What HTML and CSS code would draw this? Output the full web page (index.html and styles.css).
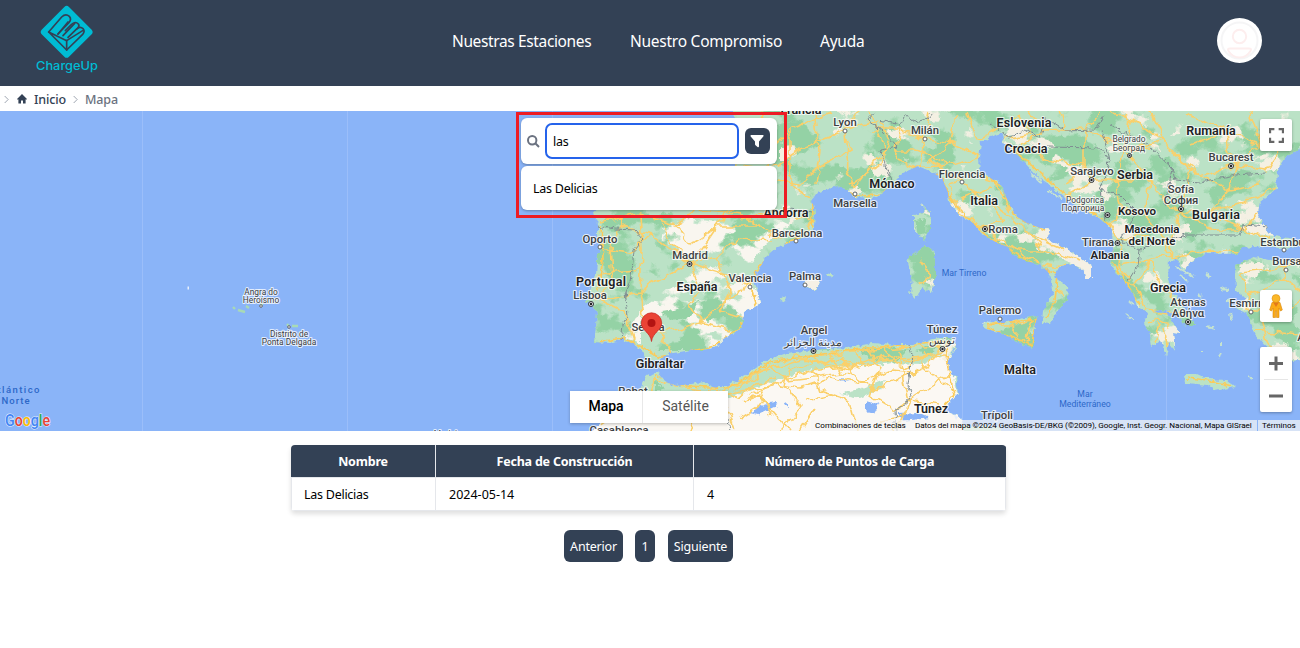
FILE: index.html
```html
<!DOCTYPE html>
<html lang="es">
<head>
<meta charset="utf-8">
<title>ChargeUp</title>
<link rel="stylesheet" href="styles.css">
</head>
<body>
<header class="topbar">
  <svg class="logo" viewBox="0 0 70 70" aria-label="ChargeUp">
    <g transform="scale(.33333) translate(-105 0)">
      <path class="logo-shape" d="M193 21Q200 14 207 21L275 89Q281 96 275 103L207 170Q200 177 193 170L125 103Q119 96 125 89Z"/>
      <g class="logo-lines">
        <path d="M146 96 185 51Q197 39 208 49Q216 58 206 69L174 102"/>
        <path d="M224 70 189 107"/>
        <path d="M204 112 231 86Q241 78 249 86Q256 94 248 103L200 150 146 96 200 122 248 92"/>
        <path d="M200 122V150M174 102 204 66M196 92 214 74Q226 62 235 72Q240 78 232 86"/>
      </g>
    </g>
    <text class="logo-name" x="1" y="70" textLength="62" lengthAdjust="spacingAndGlyphs">ChargeUp</text>
  </svg>
  <nav class="nav">
    <a class="link-a">Nuestras Estaciones</a><a class="link-b">Nuestro Compromiso</a><a class="link-c">Ayuda</a>
  </nav>
  <svg class="avatar" viewBox="0 0 45 45">
    <circle cx="22.500" cy="22.500" r="22.500" fill="#fff"/>
    <circle cx="22.500" cy="22.500" r="18" fill="none" stroke="#f5f5f6" stroke-width="2"/>
    <g fill="none" stroke="#fdeeee" stroke-width="2"><circle cx="22.500" cy="18.500" r="6.700"/><path d="M13 30.500H32Q35 30.500 33.500 33Q29.500 39.500 22.500 39.500T11.500 33Q10 30.500 13 30.500Z"/></g>
  </svg>
</header>
<div class="crumbs">
  <svg class="chev" viewBox="0 0 6 10"><path d="M.8.800 5 5 .8 9.200"/></svg>
  <svg class="home" viewBox="0 0 10 10"><path d="M5 0 10 5 9.200 5.800 8.600 5.300V9.500H6V6.500H4V9.500H1.400V5.300L.8 5.800 0 5Z"/></svg>
  <span class="crumb-home">Inicio</span>
  <svg class="chev second" viewBox="0 0 6 10"><path d="M.8.800 5 5 .8 9.200"/></svg>
  <span class="crumb-here">Mapa</span>
</div>
<main>
<section class="map">
  <svg class="canvas" viewBox="0 111 1300 320">
    <defs>
      <path id="europe" d="M732 105 734 120 735 165 728 190 700 196 650 195 610 197 600 204 593 213 598 225 598 240 600 248 597 262 596 275 591 288 586 301 592 305 597 313 596 328 594 342 610 343 622 339 636 345 643 352 646 359 652 362 660 360 668 354 690 350 703 350 717 347 723 339 736 331 742 328 744 313 760 303 757 290 752 280 758 272 765 258 778 247 797 240 808 234 814 226 815 213 812 200 816 194 835 186 848 190 854 197 866 199 877 197 890 186 903 173 918 166 932 172 942 178 947 190 949 200 956 210 960 216 972 222 980 232 995 242 1008 247 1014 256 1030 262 1040 264 1048 272 1052 284 1054 294 1048 300 1043 312 1042 322 1050 323 1058 310 1068 300 1067 286 1054 276 1060 266 1073 264 1085 271 1086 278 1092 278 1092 266 1070 251 1047 239 1051 230 1040 228 1027 223 1017 217 1010 206 1002 188 997 181 980 173 979 158 981 143 990 137 1002 133 1004 143 1012 149 1023 161 1040 179 1060 193 1080 209 1100 218 1112 229 1113 249 1111 266 1123 281 1134 294 1137 307 1150 313 1160 310 1178 314 1186 326 1196 326 1192 316 1182 306 1173 293 1168 278 1169 261 1176 259 1184 271 1190 262 1207 253 1237 254 1243 248 1267 246 1285 249 1302 246 1302 240 1273 236 1257 216 1260 202 1277 188 1278 170 1287 156 1302 148V105Z"/>
      <path id="south" d="M657 372 665 382 677 386 703 382 714 387 727 387 747 374 767 360 787 353 813 350 847 348 873 343 895 345 913 345 940 337 950 337 958 344 948 360 949 370 956 377 958 394 943 410 960 417 963 425 998 427 1004 435H588L600 424 622 414 640 390 647 376ZM1144 324 1150 333 1152 347 1160 340 1166 356 1169 343 1176 352 1173 333 1180 334 1174 325 1167 313 1148 312Z"/>
      <path id="islands" d="M921 203 930 212 930 230 924 241 914 229 914 215 926 211ZM926 245 935 252 935 278 932 293 922 289 915 299 910 294 912 278 907 259 915 254ZM984 320 1004 323 1014 320 1038 316 1034 327 1034 348 1021 344 1002 333 983 328ZM803 285 811 277 820 281 816 291ZM780 300 786 296 785 302ZM827 273 835 275 829 278ZM1185 374 1197 374 1208 379 1226 380 1235 387 1215 391 1207 385 1186 383ZM1235 265 1255 257 1275 261 1302 258V360L1284 362 1268 349 1254 333 1249 316 1236 308 1246 299 1236 291Z"/>
      <path id="bits" d="M1176 267 1195 277M1180 275 1188 282M1129 302 1134 305M1126 314 1133 320M1220 287 1228 291M1227 299 1232 304M1206 327 1215 329M1221 342V346M1201 351H1204M1219 358 1221 352M1249 376 1252 379M1230 313 1232 320M1197 294 1202 297M1207 275 1211 277M1047 190 1063 199M1030 172 1041 182M955 209 961 207"/>
      <clipPath id="land"><use href="#europe"/><use href="#south"/><use href="#islands"/></clipPath>
      <filter id="forest" x="0" y="0" width="100%" height="100%" color-interpolation-filters="sRGB"><feTurbulence type="fractalNoise" baseFrequency=".022 .03" numOctaves="4" seed="12"/><feColorMatrix values="0 0 0 0 .58 0 0 0 0 .824 0 0 0 0 .647 14 0 0 0 -7.200"/></filter>
      <filter id="plain" x="0" y="0" width="100%" height="100%" color-interpolation-filters="sRGB"><feTurbulence type="fractalNoise" baseFrequency=".03 .04" numOctaves="4" seed="31"/><feColorMatrix values="0 0 0 0 .957 0 0 0 0 .94 0 0 0 0 .89 0 20 0 0 -12.700"/></filter>
      <filter id="mixed" x="0" y="0" width="100%" height="100%" color-interpolation-filters="sRGB"><feTurbulence type="fractalNoise" baseFrequency=".018 .04" numOctaves="4" seed="8"/><feColorMatrix values="0 0 0 0 .733 0 0 0 0 .886 0 0 0 0 .776 0 18 0 0 -8.900"/></filter>
      <filter id="rough" x="-5%" y="-5%" width="110%" height="110%" color-interpolation-filters="sRGB"><feTurbulence type="fractalNoise" baseFrequency=".09" numOctaves="2" seed="4"/><feDisplacementMap in="SourceGraphic" scale="11" xChannelSelector="R" yChannelSelector="G"/></filter>
      <filter id="coast" x="-5%" y="-5%" width="110%" height="110%" color-interpolation-filters="sRGB"><feTurbulence type="fractalNoise" baseFrequency=".2" numOctaves="2" seed="9"/><feDisplacementMap in="SourceGraphic" scale="6" xChannelSelector="R" yChannelSelector="G"/></filter>
    </defs>
    <rect y="111" width="1300" height="320" fill="#8ab4f8"/>
    <g class="grid"><path d="M142.500 111V431M347.500 111V431M552.500 111V431M757.500 111V431M962.500 111V431M1166.500 111V431"/></g>
    <g filter="url(#coast)">
      <g clip-path="url(#land)">
        <rect x="570" y="100" width="735" height="335" fill="#bbe2c6"/>
        <path fill="#f9f6ef" d="M668 215 700 220 745 225 775 218 790 225 760 250 745 275 762 300 740 330 715 349 680 350 690 325 675 310 660 315 650 325 645 345 625 338 640 310 665 290 690 282 665 265 680 250 662 240Z"/>
        <path fill="#fbf8f3" d="M585 435 600 420 640 400 690 396 730 398 765 384 800 372 840 366 885 364 925 358 950 355 965 435Z"/>
        <g><rect x="640" y="210" width="140" height="150" filter="url(#mixed)"/><rect x="570" y="100" width="730" height="250" filter="url(#forest)"/><rect x="780" y="100" width="520" height="260" filter="url(#plain)"/></g>
        <path fill="#f5f0e5" d="M1050 232 1070 248 1092 262 1094 280 1086 278 1082 268 1060 258 1042 240ZM1240 228 1265 222 1275 236 1250 234ZM803 285 811 277 820 281 816 291Z"/>
        <path fill="#bbe2c6" d="M840 394 862 388 884 379 880 389 860 398ZM650 374 672 388 670 397 645 396 638 400ZM780 356 820 352 890 350 945 340 940 350 925 364 840 362 790 372Z"/>
        <path fill="#94d2a5" d="M860 350 890 347 908 350 896 362 870 360ZM916 350 938 344 930 355ZM655 380 665 389 655 392ZM915 220 926 218 925 233 918 235ZM918 252 930 252 931 260ZM700 310 722 302 726 312 708 322ZM662 312 685 308 700 300 690 318 670 320Z"/>
        <path fill="#8ab4f8" d="M866 400 879 404 874 413 866 411ZM838 379 850 380 840 382ZM750 413 768 403 778 402 775 407 758 415ZM897 414 920 413 930 418 903 421ZM784 404 789 403V407Z"/>
      </g>
      <g class="bits"><use href="#bits"/></g>
    </g>
    <path class="azores" d="M233 307 235 309M238 310 245 312M246 306 249 308M287 324 289 326M292 326H298M260 304H263"/>
    <path fill="#e8f0fb" d="M187.500 286.500H189V289.500H187.500ZM954 415 958 417 956 420Z"/>
    <g clip-path="url(#land)"><g class="roads minor" filter="url(#rough)">
      <path d="M600 222 640 214 675 225 700 210 740 215 775 235 800 238M690 263 650 235 620 225M690 263 672 243 660 220M690 263 708 240 725 215 740 205M690 263 717 257 740 238 775 240M690 263 720 272 750 285M690 263 700 290 690 305 700 322M690 263 660 280 640 292 600 300M640 214 642 250 640 292 644 325M600 248 630 252 650 235M598 275 640 270M700 322 660 333M700 322 730 330M750 285 725 300 700 322M717 257 730 290 720 312 745 320M600 300 625 312 635 340M625 215 610 245 612 280 595 300M660 333 670 352M675 225 690 245 720 225 760 225"/>
      <path d="M740 130 770 150 790 130 830 112M735 165 770 170 800 150 845 130M740 200 765 180 800 185 815 170 850 150 845 130M770 150 765 180M790 130 790 185 810 198M845 130 848 170 855 188M815 112 820 150 815 185M845 130 880 120 890 140 880 165 850 185M845 130 860 112M870 112 885 150 855 188M760 112 770 150M740 220 775 212 812 220 805 235M775 212 765 180"/>
      <path d="M900 130 924 138 950 143 980 155M900 130 895 160 915 168M924 138 920 165 895 190M950 143 930 160 962 182M924 138 930 112M950 143 955 115M965 112 975 140 995 130 1020 115M980 155 950 165 915 168M1020 115 1030 135 1005 140M895 150 915 150 950 165M870 130 900 130"/>
      <path d="M962 182 948 185 960 214 985 229 1015 250 1040 265M962 182 985 200 1003 220 985 229M985 200 1010 215 1030 235 1065 250M975 175 993 180 1010 210M1015 250 1045 250 1025 230M1045 250 1078 262M1040 265 1055 268 1065 265M1057 290 1064 297M960 200 990 188M920 260 930 275 918 285M988 325 1010 325 1032 320M1010 325 1025 342 1032 322"/>
      <path d="M1020 145 1045 130 1085 128 1125 150 1150 148M1045 130 1030 112M1085 128 1085 165 1050 160 1020 145M1085 165 1065 185M1125 150 1115 180 1092 180 1085 165M1125 150 1150 180 1165 200 1180 212M1150 180 1145 215 1160 235 1170 255M1115 180 1120 210 1110 225M1145 215 1120 210M1110 225 1120 240 1150 235M1120 240 1118 265 1135 285 1150 260 1170 255M1118 265 1150 260M1150 260 1160 285 1188 310M1135 285 1145 310 1185 315M1180 212 1210 212 1245 230 1270 240M1180 212 1172 240 1170 258M1180 212 1215 230 1245 230M1170 258 1210 250 1240 252M1210 212 1230 190 1235 165M1180 212 1190 170 1165 140 1125 150"/>
      <path d="M1235 165 1200 175 1170 150 1150 112M1235 165 1265 170 1280 150M1235 165 1225 130 1185 115M1235 165 1260 145 1250 112M1190 145 1225 130 1260 145M1125 150 1130 120 1110 112M1085 128 1100 112M1130 120 1165 140M1210 212 1250 200 1275 188M1245 230 1262 210M1060 112 1065 128M1190 170 1230 190 1260 185M1092 180 1060 200M1115 180 1150 180"/>
      <path d="M1240 273 1270 270 1300 262M1240 273 1250 295 1248 310 1285 315 1300 300M1250 295 1285 280 1300 290M1285 280 1285 260M1260 315 1270 350M1255 330 1300 335M1148 322 1160 318 1170 328M1155 342 1160 322M1167 345 1163 328"/>
      <path d="M655 378 650 392 630 405 600 424M655 378 677 387 720 392 765 370 813 356 870 350 940 345M630 405 700 398 760 388 813 370 870 362 945 355M700 398 690 431M720 392 735 431M760 388 765 402 740 418M765 402 790 431M813 370 820 390 850 400 858 431M790 366 785 385 800 405 780 431M840 355 850 372 875 390 900 378 930 365 940 345M870 350 880 368 870 395 895 410 925 390 950 375M900 350 905 380 910 400 895 431M925 350 922 365 940 380 955 392M910 400 940 405M813 356 825 366M830 353 840 372M855 350 865 365M885 350 895 362M770 368 790 380 850 372"/>
      <path d="M780 360 800 356 820 365 840 358 860 368 890 355 910 362 945 350M790 372 815 362 845 368 875 356 905 368 930 355M730 385 755 379 770 366M720 390 740 398 758 382 775 378M735 390 750 375 770 372M750 395 775 384 800 388 830 378 860 384 890 370 915 372M742 402 760 395 772 415M805 400 835 395M800 431 815 408M880 420 905 415"/>
    </g></g>
    <g clip-path="url(#land)"><g class="roads coastroads" filter="url(#coast)"><path d="M601 225 603 260 598 290M600 342 622 338 648 350 660 358 715 346 740 328 756 303 750 285 760 265 790 242 812 232 813 205 835 190 855 196 880 195 915 168 942 178 950 200 985 235 1015 253 1040 268 1058 275 1055 300 1047 318M1008 145 1060 190 1110 225 1112 260 1140 305M980 170 1003 188 1015 216 1045 230M655 376 690 386 730 388 770 362 850 350 945 341 950 375 954 395 940 410M987 324 1036 320 1032 345 987 328M1187 378 1208 380 1232 386"/></g></g>
    <path class="borders" filter="url(#coast)" d="M597 226 615 229 635 230 643 239 634 250 632 270 630 281 625 292 628 315 623 325 621 340M790 209 812 212M896 185 888 173 880 150 898 147 882 130 868 120 875 112M880 120 900 125 905 115 915 122 928 118 933 112M990 124 1010 138 1025 130 1040 137 1045 118 1065 131 1095 130 1105 115M1048 147 1100 148 1110 160 1100 190 1120 195 1135 210 1130 225 1120 240 1140 250 1185 235 1240 235 1245 225 1267 227M1110 125 1148 145 1172 168 1175 180 1200 182 1235 175 1265 173M1102 130 1110 160M1100 190 1105 220M1128 281 1138 265 1140 250M1165 205 1172 170M909 345 912 355 908 385 912 395 905 405 895 410 896 431M728 420 730 431"/>
    <g class="labels">
      <g class="country">
        <text x="601" y="286" textLength="50">Portugal</text><text x="697" y="291">España</text><text x="660" y="368">Gibraltar</text><text x="786" y="217">Andorra</text><text x="892" y="188">Mónaco</text><text x="984" y="205">Italia</text><text x="1024" y="127" textLength="55">Eslovenia</text><text x="1026" y="153">Croacia</text><text x="1211" y="135">Rumanía</text><text x="1135" y="179">Serbia</text><text class="cs" x="1137" y="215">Kosovo</text><text x="1216" y="219" textLength="48">Bulgaria</text><text class="cs" x="1152" y="233" textLength="55">Macedonia</text><text class="cs" x="1152" y="245" textLength="47">del Norte</text><text class="cs" x="1110" y="259">Albania</text><text x="1168" y="292">Grecia</text><text x="1020" y="374">Malta</text><text x="931" y="413">Túnez</text><text x="801" y="114">Francia</text>
      </g>
      <g class="city">
        <text x="600" y="243">Oporto</text><text x="590" y="299">Lisboa</text><text x="690" y="259">Madrid</text><text x="750" y="282">Valencia</text><text x="797" y="237">Barcelona</text><text x="805" y="280">Palma</text><text x="648" y="331">Sevilla</text><text x="845" y="126">Lyon</text><text x="925" y="134">Milán</text><text x="855" y="207">Marsella</text><text x="962" y="178">Florencia</text><text x="1003" y="233">Roma</text><text x="1092" y="175">Sarajevo</text><text x="1231" y="161">Bucarest</text><text x="1181" y="193">Sofía</text><text x="1181" y="204">София</text><text x="1098" y="246">Tirana</text><text x="1284" y="246">Estambul</text><text x="1287" y="265">Bursa</text><text x="1250" y="307">Esmirna</text><text x="1188" y="306">Atenas</text><text x="1188" y="317">Αθήνα</text><text x="1000" y="314">Palermo</text><text x="942" y="333">Túnez</text><text x="942" y="344">تونس</text><text x="814" y="334">Argel</text><text x="813" y="346">مدينة الجزائر</text><text x="997" y="419">Trípoli</text><text x="633" y="395">Rabat</text><text x="619" y="434">Casablanca</text><text x="1301" y="341">A</text>
      </g>
      <g class="town">
        <text x="261" y="295">Angra do</text><text x="261" y="303">Heroísmo</text><text x="289" y="337">Distrito de</text><text x="289" y="345">Ponta Delgada</text><text x="1129" y="142">Belgrado</text><text x="1129" y="151">Београд</text><text x="1085" y="203">Podgorica</text><text x="1083" y="211">Подгорица</text><text x="449" y="437">Madeira</text>
      </g>
      <g class="sea"><text x="964" y="276">Mar Tirreno</text><text x="1085" y="397">Mar</text><text x="1085" y="407">Mediterráneo</text><g class="ocean"><text x="19" y="393" textLength="43">tlántico</text><text x="16" y="404">Norte</text></g></g>
    </g>
    <g class="dots">
      <circle cx="600" cy="247" r="2"/><circle cx="750" cy="287" r="2"/><circle cx="796" cy="241" r="2"/><circle cx="805" cy="285" r="2"/><circle cx="845" cy="131" r="2"/><circle cx="925" cy="139" r="2"/><circle cx="855" cy="194" r="2"/><circle cx="962" cy="182" r="2"/><circle cx="1000" cy="319" r="2"/><circle cx="1284" cy="250" r="2"/><circle cx="1286" cy="270" r="2"/><circle cx="1251" cy="312" r="2"/><circle cx="261" cy="306" r="1.300"/><circle cx="289" cy="327" r="1.300"/>
    </g>
    <g class="capitals"><circle cx="689.500" cy="264" r="2.500"/><circle cx="591" cy="304" r="2.500"/><circle cx="985" cy="229" r="2.500"/><circle cx="1091.500" cy="180" r="2.500"/><circle cx="1129.500" cy="155.500" r="2"/><circle cx="1107.500" cy="215" r="2.500"/><circle cx="1117.500" cy="243" r="2.500"/><circle cx="1181" cy="209" r="2.500"/><circle cx="1231" cy="166" r="2.500"/><circle cx="1188" cy="322" r="2.500"/><circle cx="942.500" cy="349" r="2.500"/><circle cx="813.500" cy="351" r="2.500"/></g>
    <g class="cores"><circle cx="689.500" cy="264" r="1.200"/><circle cx="591" cy="304" r="1.200"/><circle cx="985" cy="229" r="1.200"/><circle cx="1091.500" cy="180" r="1.200"/><circle cx="1129.500" cy="155.500" r="1"/><circle cx="1107.500" cy="215" r="1.200"/><circle cx="1117.500" cy="243" r="1.200"/><circle cx="1181" cy="209" r="1.200"/><circle cx="1231" cy="166" r="1.200"/><circle cx="1188" cy="322" r="1.200"/><circle cx="942.500" cy="349" r="1.200"/><circle cx="813.500" cy="351" r="1.200"/></g>
    <path fill="#ea4335" stroke="#c5221f" stroke-width=".7" d="M651.500 341.500C650.500 332.500 641.300 330.500 641.300 323A10.200 10.200 0 0 1 661.700 323C661.700 330.500 652.500 332.500 651.500 341.500Z"/><circle cx="651.500" cy="323" r="4" fill="#b31412"/>
    <g class="google"><text x="5" y="425.500" textLength="45" lengthAdjust="spacingAndGlyphs"><tspan fill="#4285f4">G</tspan><tspan fill="#ea4335">o</tspan><tspan fill="#fbbc04">o</tspan><tspan fill="#4285f4">g</tspan><tspan fill="#34a853">l</tspan><tspan fill="#ea4335">e</tspan></text></g>
  </svg>

  <div class="finder">
    <div class="search">
      <svg class="glass" viewBox="0 0 13 13"><circle cx="5.200" cy="5.200" r="4.200"/><path d="M8.300 8.300 12 12"/></svg>
      <input class="query" type="text" value="las">
      <button class="filter"><svg viewBox="0 0 14 14"><path d="M1 1H13Q14 1.500 13.300 2.500L9 7.500V12.600Q8.500 13.600 7.600 13L5.500 11.200Q5 10.800 5 10.200V7.500L.7 2.500Q0 1.500 1 1Z"/></svg></button>
    </div>
    <div class="option">Las Delicias</div>
  </div>
  <div class="types"><span class="on">Mapa</span><span>Satélite</span></div>
  <div class="ctl full"><svg viewBox="0 0 14 14"><path d="M1 5V1H5M9 1H13V5M13 9V13H9M5 13H1V9"/></svg></div>
  <div class="ctl pegman"><svg viewBox="0 0 16 25"><path fill="#fbab18" stroke="#d9860b" stroke-width=".6" d="M4 8.500Q8 7 12 8.500L14.300 16 12.500 17 11 14V23.500H8.500V17H7.500V23.500H5V14L3.500 17 1.700 16Z"/><path fill="#e2791b" d="M5 8.300 8 13 11 8.300Z"/><circle cx="8" cy="4.500" r="4" fill="#fbb829" stroke="#d9860b" stroke-width=".5"/></svg></div>
  <div class="zoom"><svg viewBox="0 0 32 65"><path class="sep" d="M4 32.500H28"/><path d="M9 16.500H23M16 9.500V23.500M9 49H23"/></svg></div>
  <div class="credits"><span class="keys">Combinaciones de teclas</span><span class="data">Datos del mapa ©2024 GeoBasis-DE/BKG (©2009), Google, Inst. Geogr. Nacional, Mapa GISrael</span><span class="terms">Términos</span></div>
</section>
<table class="stations">
  <thead><tr><th class="c1">Nombre</th><th class="c2">Fecha de Construcción</th><th class="c3">Número de Puntos de Carga</th></tr></thead>
  <tbody><tr><td>Las Delicias</td><td class="date">2024-05-14</td><td>4</td></tr></tbody>
</table>
<div class="pager"><button class="prev">Anterior</button><button class="num">1</button><button class="next">Siguiente</button></div>
</main>
</body>
</html>
```
FILE: styles.css
```css
* { box-sizing: border-box; }
body { margin: 0; background: #fff; color: #000; font: 13px "Noto Sans", "Open Sans", sans-serif; height: 648px; overflow: hidden; }
button, input { font: inherit; border: 0; margin: 0; padding: 0; }
.topbar { height: 86px; background: #334155; display: grid; grid-template-columns: 452px 1fr 45px; padding-right: 38px; }
.logo { width: 70px; height: 70px; margin-left: 35px; overflow: visible; }
.logo-shape { fill: #00bcd4; }
.logo-lines { fill: none; stroke: #334155; stroke-width: 5; stroke-linejoin: round; stroke-linecap: round; }
.logo-name { font: 500 12px Inter, sans-serif; fill: #00bcd4; }
.nav { display: flex; align-items: center; gap: 38px; color: #fff; font-size: 15.5px; letter-spacing: -.25px; padding-bottom: 5px; white-space: nowrap; }
.link-a { width: 140px; letter-spacing: -.37px; }
.link-b { width: 152px; }
.avatar { width: 45px; height: 45px; margin-top: 18px; }
.crumbs { height: 25px; display: flex; align-items: center; padding: 1px 0 0 4px; color: #334155; font-size: 12.5px; letter-spacing: -.15px; }
.chev { width: 5px; height: 9px; fill: none; stroke: #8a93a0; stroke-width: 1; }
.home { width: 10px; height: 10px; margin: 0 7px 0 8px; fill: #334155; }
.crumb-home { width: 39px; font-weight: 500; }
.second { margin-right: 7px; }
.crumb-here { color: #6b7280; font-weight: 500; }
.map { position: relative; height: 320px; overflow: hidden; }
.canvas { display: block; width: 1300px; height: 320px; }
.grid { stroke: #9bbefa; stroke-width: 1; }
.bits { fill: none; stroke: #c5e3cf; stroke-width: 2; }
.azores { fill: none; stroke: #a8dab5; stroke-width: 2.4; }
.roads { fill: none; stroke: #fbd06a; stroke-width: 1.6; stroke-linejoin: round; }
.coastroads { stroke: #fbcb5a; stroke-width: 1.7; }
.borders { fill: none; stroke: #7f8c91; stroke-width: 1; }
.labels { font-family: Roboto, "Noto Sans", sans-serif; text-anchor: middle; }
.labels text { paint-order: stroke; stroke: #fff; stroke-opacity: .75; stroke-width: 2.2px; stroke-linejoin: round; fill: #202124; }
.country text { font-size: 12.5px; font-weight: 600; }
.country .cs { font-size: 11.5px; }
.city text { font-size: 11.3px; font-weight: 500; fill: #3c4043; }
.town text { font-size: 8.4px; fill: #3c4043; }
.labels .sea text { font-size: 8.7px; fill: #2d68c8; stroke: none; }
.labels .ocean text { font-size: 9.5px; letter-spacing: 1px; font-weight: 500; }
.dots circle { fill: #fff; stroke: #5f6368; stroke-width: 1; }
.capitals circle { fill: #e8eaed; stroke: #303438; stroke-width: 1; }
.cores circle { fill: #202124; }
.google { font: 500 17px Roboto, sans-serif; paint-order: stroke; stroke: #fff; stroke-width: 1.2px; stroke-opacity: .8; }
.finder { position: absolute; left: 516px; top: 1px; width: 271px; height: 106px; border: 3px solid #ed1c24; padding: 3px 7px 0 2px; display: flex; flex-direction: column; gap: 2px; }
.search, .option { background: #fff; border-radius: 6px; box-shadow: 0 1px 3px rgba(0,0,0,.3); }
.search { height: 46px; display: flex; align-items: center; padding: 0 7px 0 6px; }
.glass { width: 13px; height: 13px; margin-right: 5px; fill: none; stroke: #6b7280; stroke-width: 2; }
.query { width: 194px; height: 36px; border: 2px solid #2563eb; border-radius: 7px; padding: 0 6px; margin-right: 6px; font-size: 12.5px; letter-spacing: -.2px; outline: 0; }
.filter { width: 25px; height: 26px; border-radius: 6px; background: #334155; display: grid; place-items: center; }
.filter svg { width: 14px; height: 14px; fill: #fff; margin-right: 1px; }
.option { height: 44px; padding: 1px 12px 0; line-height: 44px; font-size: 12.5px; letter-spacing: -.26px; }
.types { position: absolute; left: 570px; top: 280px; width: 158px; height: 32px; background: #fff; display: flex; box-shadow: 0 1px 3px rgba(0,0,0,.25); font: 14px/31px Roboto, sans-serif; color: #565656; text-align: center; }
.types span { width: 85px; }
.types .on { width: 73px; color: #000; font-weight: 500; border-right: 1px solid #e8e8e8; }
.ctl, .zoom { position: absolute; left: 1260px; width: 32px; height: 32px; background: #fff; border-radius: 2px; box-shadow: 0 1px 3px rgba(0,0,0,.3); display: grid; place-items: center; }
.full { top: 8px; }
.full svg { width: 15px; height: 15px; fill: none; stroke: #666; stroke-width: 2; }
.pegman { top: 179px; }
.pegman svg { width: 16px; height: 25px; }
.zoom { top: 236px; height: 65px; }
.zoom svg { width: 32px; height: 65px; stroke: #666; stroke-width: 3; }
.zoom .sep { stroke: #e6e6e6; stroke-width: 1; }
.credits { position: absolute; right: 0; bottom: 0; width: 489px; height: 11px; display: flex; font: 8.1px/11px Roboto, sans-serif; color: #000; white-space: nowrap; }
.credits span { background: rgba(245,245,245,.72); }
.keys { width: 99px; padding-left: 4px; }
.data { width: 347px; padding-left: 5px; letter-spacing: -.055px; }
.terms { flex: 1; margin-left: 1px; padding-left: 4px; }
.stations { width: 715px; margin: 14px 0 0 291px; border-collapse: separate; border-spacing: 0; table-layout: fixed; border-radius: 4px; overflow: hidden; box-shadow: 0 3px 5px rgba(0,0,0,.13); font-size: 12.5px; }
.stations th { height: 32px; padding: 0; background: #334155; color: #fff; font-weight: 700; border-right: 1px solid #e5e7eb; letter-spacing: -.2px; }
.stations th:last-child { border-right-color: #334155; }
.stations td { height: 34px; padding: 0 13px; border: 1px solid #e5e7eb; border-left: 0; letter-spacing: -.26px; }
.stations td:first-child { border-left: 1px solid #e5e7eb; padding-left: 12px; }
.stations .date { letter-spacing: 0; }
.c1 { width: 145px; }
.c2 { width: 258px; }
.c3 { width: 312px; }
.pager { display: flex; gap: 12px; margin: 19px 0 0 564px; }
.pager button { height: 32px; border-radius: 6px; background: #334155; color: #fff; font-size: 12.5px; letter-spacing: -.2px; }
.pager .prev { width: 59px; }
.pager .num { width: 20px; }
.pager .next { width: 65px; margin-left: 1px; }
```
